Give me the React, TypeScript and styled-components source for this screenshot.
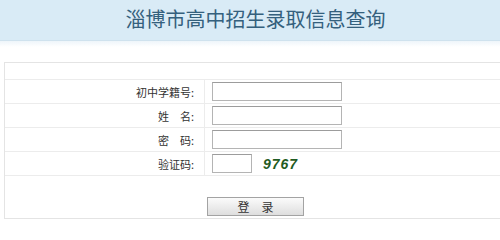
import React from 'react';
import styled, { createGlobalStyle } from 'styled-components';

const GlobalStyle = createGlobalStyle`
  html, body {
    margin: 0;
    padding: 0;
    background: #ffffff;
    overflow: hidden;
  }
  body {
    font-family: "Noto Sans CJK SC", "Liberation Sans", sans-serif;
    font-size: 12px;
    color: #333333;
  }
`;

const Page = styled.div`
  width: 511px;
`;

const Header = styled.div`
  height: 40px;
  display: flex;
  justify-content: center;
  align-items: center;
  background: #d9ebf6;
  border-bottom: 1px solid #cfe2ee;
`;

const Title = styled.h1`
  margin: 0 0 4px;
  font-size: 20px;
  font-weight: normal;
  color: #34607d;
`;

const Shade = styled.div`
  height: 6px;
  background: linear-gradient(#eef5fa, #ffffff);
`;

const Body = styled.div`
  padding: 15px 0 0 4px;
`;

const FormTable = styled.table`
  width: 503px;
  border: 1px solid #e4e4e4;
  border-collapse: separate;
  border-spacing: 0;
`;

const Cell = styled.td<{ $label?: boolean; $h?: number }>`
  height: ${({ $h }) => $h ?? 23}px;
  padding: 0 ${({ $label }) => ($label ? '10px' : '0')} 0 ${({ $label }) => ($label ? '0' : '7px')};
  border-bottom: 1px solid #ececec;
  border-right: ${({ $label }) => ($label ? '1px solid #ececec' : 'none')};
  text-align: ${({ $label }) => ($label ? 'right' : 'left')};
  width: ${({ $label }) => ($label ? '189px' : 'auto')};
  font-size: ${({ $label }) => ($label ? '11px' : '12px')};
  vertical-align: middle;
  white-space: nowrap;
  line-height: 16px;
`;

const ButtonCell = styled.td`
  height: 21px;
  padding: 20px 0 1px;
  text-align: center;
`;

const Input = styled.input<{ $w?: number }>`
  box-sizing: border-box;
  width: ${({ $w }) => $w ?? 130}px;
  height: 19px;
  margin: 0;
  padding: 0 2px;
  border: 1px solid #b4b4b4;
  border-top-color: #9c9c9c;
  background: #ffffff;
  vertical-align: middle;
`;

const Captcha = styled.span`
  display: inline-block;
  margin-left: 11px;
  font-family: "Liberation Sans", Arial, sans-serif;
  font-size: 14px;
  font-weight: bold;
  font-style: italic;
  letter-spacing: 1px;
  color: #1f5b22;
  vertical-align: middle;
`;

const LoginButton = styled.button`
  box-sizing: border-box;
  width: 97px;
  height: 19px;
  padding: 0;
  border: 1px solid #a3a3a3;
  background: linear-gradient(#fbfbfb, #dedede);
  font-family: "Noto Sans CJK SC", sans-serif;
  font-size: 12px;
  color: #333333;
  line-height: 17px;
  cursor: pointer;
`;

const fields = [
  { label: '初中学籍号:', type: 'text' },
  { label: '姓　名:', type: 'text' },
  { label: '密　码:', type: 'password' },
];

export default function App() {
  return (
    <Page>
      <GlobalStyle />
      <Header>
        <Title>淄博市高中招生录取信息查询</Title>
      </Header>
      <Shade />
      <Body>
        <FormTable>
          <tbody>
            <tr>
              <Cell colSpan={2} $h={16} />
            </tr>
            {fields.map((f) => (
              <tr key={f.label}>
                <Cell $label>{f.label}</Cell>
                <Cell>
                  <Input type={f.type} />
                </Cell>
              </tr>
            ))}
            <tr>
              <Cell $label>验证码:</Cell>
              <Cell>
                <Input $w={40} type="text" />
                <Captcha>9767</Captcha>
              </Cell>
            </tr>
            <tr>
              <ButtonCell colSpan={2}>
                <LoginButton type="button">登　录</LoginButton>
              </ButtonCell>
            </tr>
          </tbody>
        </FormTable>
      </Body>
    </Page>
  );
}
